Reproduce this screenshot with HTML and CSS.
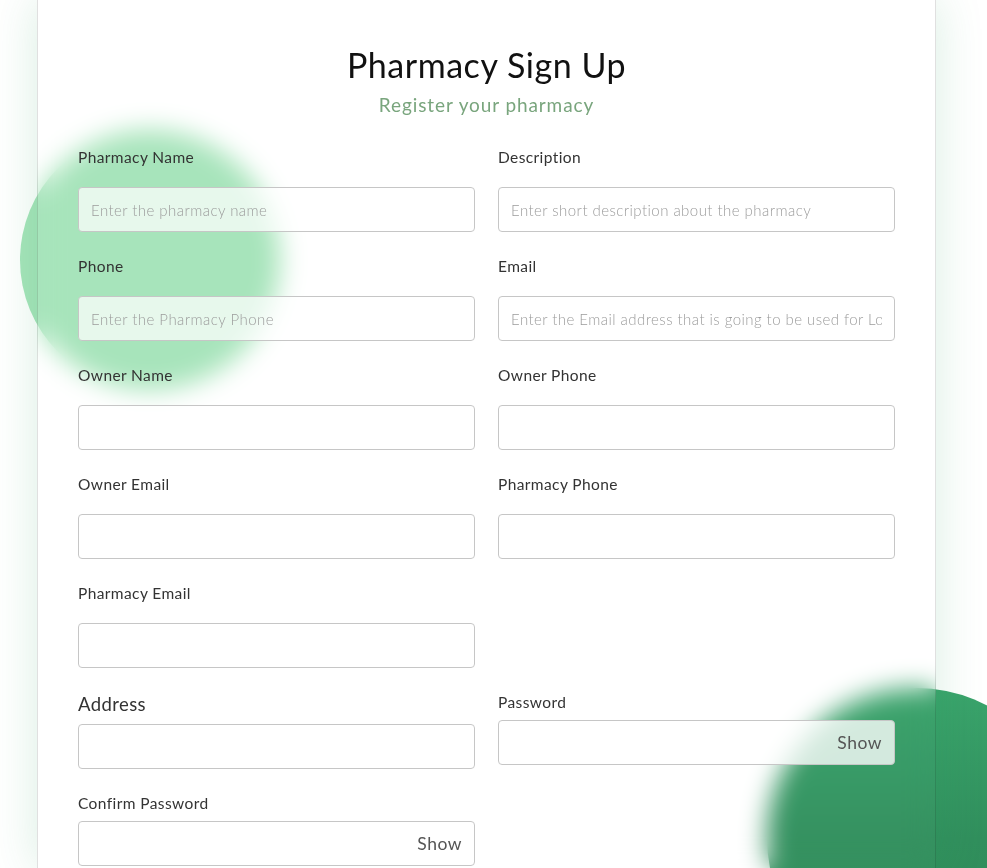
FILE: index.html
```html
<!DOCTYPE html>
<html lang="en">
<head>
<meta charset="utf-8">
<title>Pharmacy Sign Up</title>
<link rel="stylesheet" href="styles.css">
</head>
<body>
<div class="blob blob-light"></div>
<div class="blob blob-dark"></div>
<main class="page">
  <section class="card">
    <h1 class="title">Pharmacy Sign Up</h1>
    <p class="subtitle">Register your pharmacy</p>
    <form class="grid">
      <div class="field">
        <label class="label">Pharmacy Name</label>
        <input class="input" type="text" placeholder="Enter the pharmacy name">
      </div>
      <div class="field">
        <label class="label">Description</label>
        <input class="input" type="text" placeholder="Enter short description about the pharmacy">
      </div>
      <div class="field">
        <label class="label">Phone</label>
        <input class="input" type="text" placeholder="Enter the Pharmacy Phone">
      </div>
      <div class="field">
        <label class="label">Email</label>
        <input class="input" type="text" placeholder="Enter the Email address that is going to be used for Login">
      </div>
      <div class="field">
        <label class="label">Owner Name</label>
        <input class="input" type="text">
      </div>
      <div class="field">
        <label class="label">Owner Phone</label>
        <input class="input" type="text">
      </div>
      <div class="field">
        <label class="label">Owner Email</label>
        <input class="input" type="text">
      </div>
      <div class="field">
        <label class="label">Pharmacy Phone</label>
        <input class="input" type="text">
      </div>
      <div class="field">
        <label class="label">Pharmacy Email</label>
        <input class="input" type="text">
      </div>
      <div class="field empty"></div>
      <div class="field tight">
        <label class="label label-lg">Address</label>
        <input class="input" type="text">
      </div>
      <div class="field tight">
        <label class="label">Password</label>
        <div class="input pw"><span class="show">Show</span></div>
      </div>
      <div class="field tight">
        <label class="label">Confirm Password</label>
        <div class="input pw"><span class="show">Show</span></div>
      </div>
    </form>
  </section>
</main>
</body>
</html>
```
FILE: styles.css
```css
* { box-sizing: border-box; }
html, body {
  margin: 0;
  padding: 0;
  height: 100%;
  overflow: hidden;
  background: #ffffff;
  font-family: "Lato", "Noto Sans", sans-serif;
}
.blob {
  position: absolute;
  border-radius: 50%;
  z-index: 0;
}
.blob-light {
  left: 20px;
  top: 130px;
  width: 260px;
  height: 260px;
  background: #a6e4ba;
}
.blob-dark {
  left: 767px;
  top: 688px;
  width: 300px;
  height: 300px;
  background: linear-gradient(180deg, #3aa46c 0%, #318f5d 50%, #2e8b57 100%);
}
.page {
  position: relative;
  z-index: 1;
  padding: 0 51px 0 37px;
  height: 100%;
}
.card {
  height: 100%;
  border-left: 1px solid rgba(0, 0, 0, 0.12);
  border-right: 1px solid rgba(0, 0, 0, 0.12);
  background: rgba(255, 255, 255, 0.02);
  backdrop-filter: blur(13px);
  -webkit-backdrop-filter: blur(13px);
  box-shadow: 0 0 44px rgba(46, 160, 95, 0.18);
  padding: 45px 40px 0 40px;
}
.title {
  margin: 0;
  text-align: center;
  font-weight: 400;
  font-size: 34px;
  line-height: 40px;
  letter-spacing: 0.55px;
  color: #111;
}
.subtitle {
  margin: 7px 0 0;
  text-align: center;
  font-size: 19px;
  line-height: 26px;
  letter-spacing: 0.9px;
  color: #79a57d;
}
.grid {
  margin-top: 27px;
  display: grid;
  grid-template-columns: 1fr 1fr;
  column-gap: 23px;
  row-gap: 22px;
}
.field {
  display: flex;
  flex-direction: column;
}
.label {
  font-size: 15.5px;
  line-height: 24px;
  letter-spacing: 0.4px;
  color: #333;
  margin-bottom: 18px;
}
.tight .label { margin-bottom: 6px; }
.label-lg {
  font-size: 18.5px;
  line-height: 28px;
}
.input {
  height: 45px;
  width: 100%;
  border: 1px solid #c6c6c6;
  border-radius: 4px;
  background: rgba(255, 255, 255, 0.72);
  padding: 0 12px;
  font-family: inherit;
  font-size: 15px;
  letter-spacing: 0.45px;
  color: #333;
  outline: none;
}
.input::placeholder {
  color: #9c9c9c;
  font-weight: 300;
}
.pw {
  display: flex;
  align-items: center;
  justify-content: flex-end;
  background: rgba(255, 255, 255, 0.78);
}
.show {
  font-size: 17.5px;
  letter-spacing: 0.5px;
  color: #555;
}
```
